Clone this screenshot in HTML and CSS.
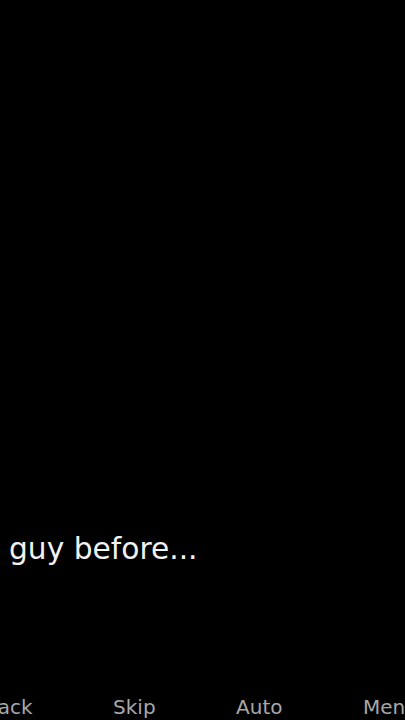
FILE: index.html
```html
<!DOCTYPE html>
<html>
<head>
<meta charset="utf-8">
<link rel="stylesheet" href="styles.css">
</head>
<body>
<div class="screen">
  <div class="stage"></div>
  <div class="dialogue">guy before...</div>
  <div class="quick-menu">
    <span class="qm-item">Back</span>
    <span class="qm-item">Skip</span>
    <span class="qm-item">Auto</span>
    <span class="qm-item">Menu</span>
  </div>
</div>
</body>
</html>
```
FILE: styles.css
```css
html, body {
  margin: 0;
  padding: 0;
  background: #000;
  width: 405px;
  height: 720px;
  overflow: hidden;
}
.screen {
  width: 405px;
  height: 720px;
  display: flex;
  flex-direction: column;
  font-family: "DejaVu Sans", sans-serif;
  overflow: hidden;
}
.stage {
  flex: 1;
}
.dialogue {
  color: #f2f2f2;
  font-size: 29.7px;
  line-height: 34px;
  padding-left: 9px;
  margin-bottom: 129px;
}
.quick-menu {
  display: flex;
  gap: 80.5px;
  margin-left: -16px;
  height: 25px;
  align-items: flex-start;
  white-space: nowrap;
}
.qm-item {
  flex: 0 0 auto;
  color: #a8a8a8;
  font-size: 20px;
  line-height: 24px;
}
```
